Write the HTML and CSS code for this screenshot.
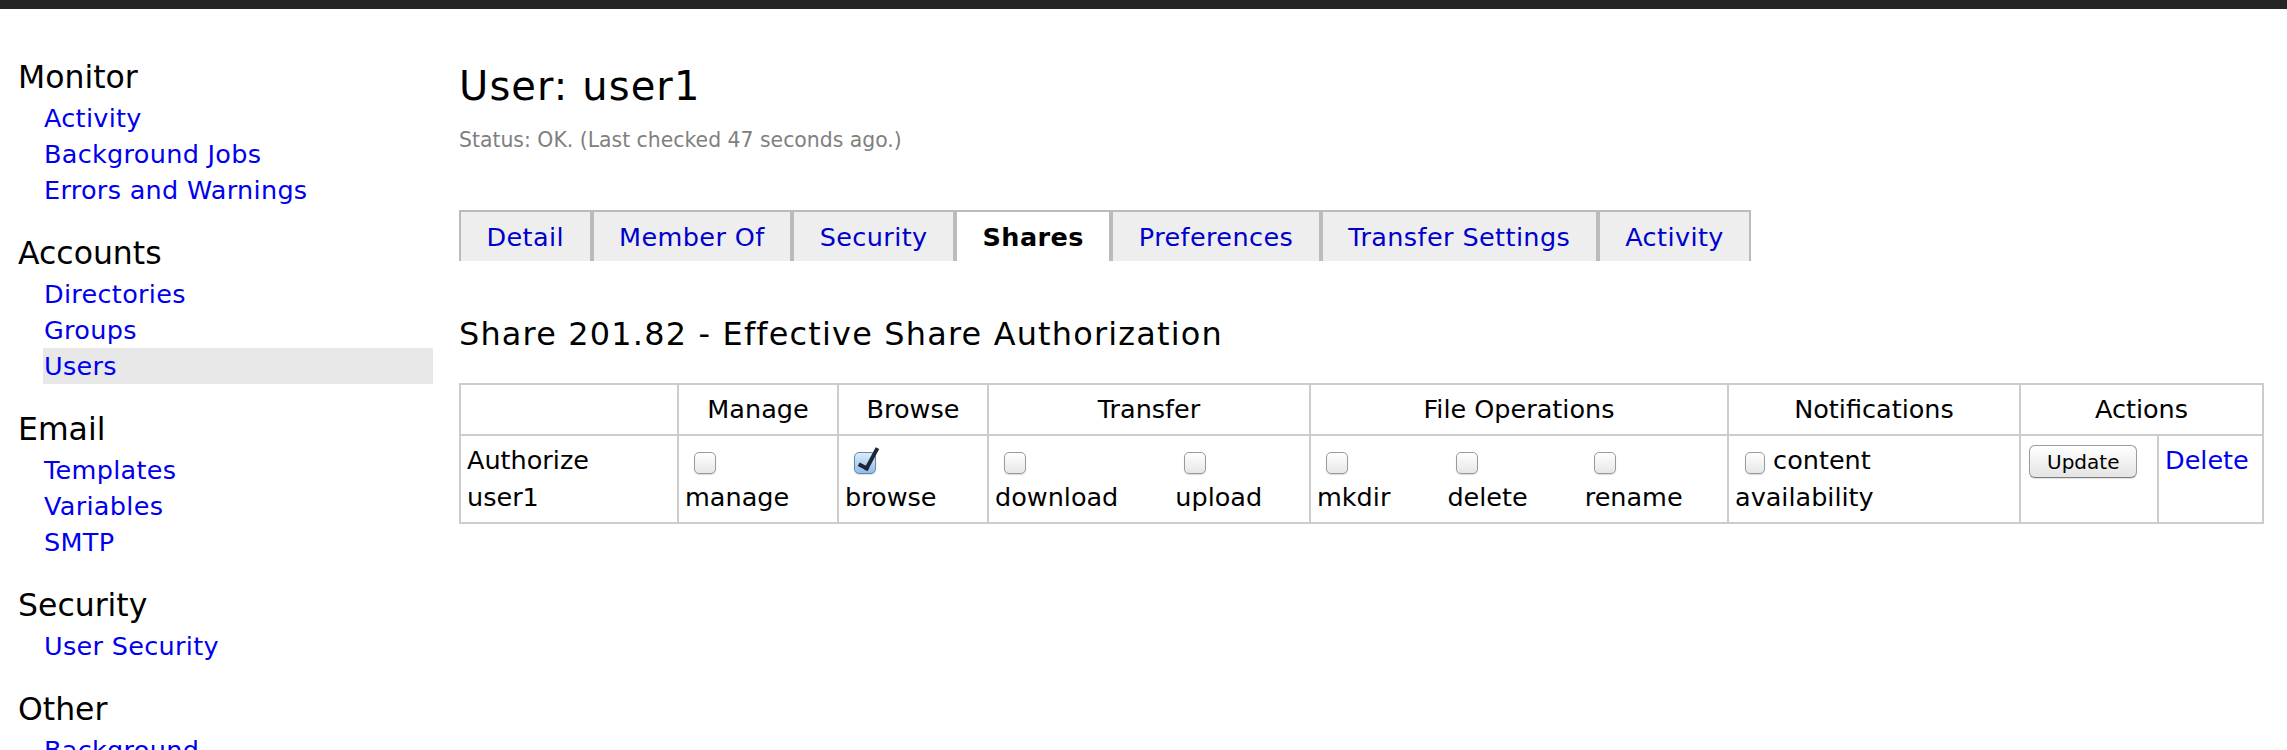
FILE: index.html
```html
<!DOCTYPE html>
<html lang="en">
<head>
    <meta charset="UTF-8">
    <meta name="viewport" content="width=device-width, initial-scale=1.0">
    <link rel="stylesheet" href="styles.css">
    <title>User: user1</title>
</head>
<body>
    <div id="topBar"></div>

    <div id="page">
        <div id="sidebar">
            <div class="nav-group">
                <h3 class="nav-title">Monitor</h3>
                <ul class="nav-list">
                    <li><a href="#">Activity</a></li>
                    <li><a href="#">Background Jobs</a></li>
                    <li><a href="#">Errors and Warnings</a></li>
                </ul>
            </div>
            <div class="nav-group">
                <h3 class="nav-title">Accounts</h3>
                <ul class="nav-list">
                    <li><a href="#">Directories</a></li>
                    <li><a href="#">Groups</a></li>
                    <li class="current"><a href="#">Users</a></li>
                </ul>
            </div>
            <div class="nav-group">
                <h3 class="nav-title">Email</h3>
                <ul class="nav-list">
                    <li><a href="#">Templates</a></li>
                    <li><a href="#">Variables</a></li>
                    <li><a href="#">SMTP</a></li>
                </ul>
            </div>
            <div class="nav-group">
                <h3 class="nav-title">Security</h3>
                <ul class="nav-list">
                    <li><a href="#">User Security</a></li>
                </ul>
            </div>
            <div class="nav-group">
                <h3 class="nav-title">Other</h3>
                <ul class="nav-list">
                    <li><a href="#">Background</a></li>
                </ul>
            </div>
        </div>

        <div id="content">
            <h1 class="page-title">User: user1</h1>
            <p class="status">Status: OK. (Last checked 47 seconds ago.)</p>

            <ul class="tabs">
                <li><a href="#">Detail</a></li>
                <li><a href="#">Member Of</a></li>
                <li><a href="#">Security</a></li>
                <li class="active"><a href="#">Shares</a></li>
                <li><a href="#">Preferences</a></li>
                <li><a href="#">Transfer Settings</a></li>
                <li><a href="#">Activity</a></li>
            </ul>

            <h2 class="section-title">Share 201.82 - Effective Share Authorization</h2>

            <form id="authForm">
                <table class="auth-table">
                    <colgroup>
                        <col class="col-name">
                        <col class="col-manage">
                        <col class="col-browse">
                        <col class="col-transfer">
                        <col class="col-fileops">
                        <col class="col-notify">
                        <col class="col-update">
                        <col class="col-delete">
                    </colgroup>
                    <tr>
                        <th></th>
                        <th>Manage</th>
                        <th>Browse</th>
                        <th>Transfer</th>
                        <th>File Operations</th>
                        <th>Notifications</th>
                        <th colspan="2">Actions</th>
                    </tr>
                    <tr>
                        <td>Authorize<br>user1</td>
                        <td>
                            <label class="opt"><input type="checkbox" class="check" name="manage"><br>manage</label>
                        </td>
                        <td>
                            <label class="opt"><input type="checkbox" class="check" name="browse" checked><br>browse</label>
                        </td>
                        <td>
                            <div class="opts">
                                <label class="opt"><input type="checkbox" class="check" name="download"><br>download</label>
                                <label class="opt"><input type="checkbox" class="check" name="upload"><br>upload</label>
                            </div>
                        </td>
                        <td>
                            <div class="opts">
                                <label class="opt"><input type="checkbox" class="check" name="mkdir"><br>mkdir</label>
                                <label class="opt"><input type="checkbox" class="check" name="delete"><br>delete</label>
                                <label class="opt"><input type="checkbox" class="check" name="rename"><br>rename</label>
                            </div>
                        </td>
                        <td>
                            <label class="opt"><input type="checkbox" class="check inline" name="content"> content<br>availability</label>
                        </td>
                        <td><button type="submit" class="btn">Update</button></td>
                        <td><a href="#" class="delete-link">Delete</a></td>
                    </tr>
                </table>
            </form>
        </div>
    </div>

    <script>
        document.getElementById("authForm").addEventListener("submit", function(event) {
            event.preventDefault();
        });
    </script>
</body>
</html>
```

FILE: styles.css
```css
body {
    font-family: "DejaVu Sans", Verdana, sans-serif;
    font-size: 25.5px;
    margin: 0;
    padding: 0;
    background-color: #fff;
    color: #000;
}

a {
    text-decoration: none;
}

#topBar {
    height: 9px;
    background-color: #252525;
}

#page {
    display: flex;
}

/* left navigation */
#sidebar {
    width: 433px;
    flex-shrink: 0;
    padding-top: 49px;
}

.nav-group {
    margin-bottom: 26px;
}

.nav-title {
    font-size: 31.5px;
    font-weight: normal;
    line-height: 38px;
    margin: 0 0 4px 18px;
}

.nav-list {
    list-style: none;
    margin: 0;
    padding: 0 0 0 43px;
}

.nav-list li {
    line-height: 36px;
}

.nav-list a {
    display: block;
    padding-left: 1px;
    color: #0000ee;
    letter-spacing: 0.3px;
}

.nav-list li.current {
    background-color: #e8e8e8;
}

/* main area */
#content {
    flex: 1;
    padding: 53px 25px 0 26px;
}

.page-title {
    font-size: 40px;
    font-weight: normal;
    line-height: 48px;
    letter-spacing: 1.1px;
    margin: 0;
}

.status {
    font-size: 20.4px;
    line-height: 25px;
    color: #808080;
    margin: 18px 0 0;
}

.tabs {
    display: flex;
    list-style: none;
    margin: 57px 0 0;
    padding: 0;
}

.tabs li {
    border: 2px solid #bbb;
    border-bottom: none;
    background-color: #eee;
    padding: 7px 25.5px 5px;
    line-height: 37px;
    letter-spacing: 0.4px;
}

.tabs a {
    color: #0000cc;
}

.tabs li.active {
    background-color: #fff;
}

.tabs li.active a {
    color: #000;
    font-weight: bold;
}

.section-title {
    font-size: 31.9px;
    font-weight: normal;
    line-height: 38px;
    letter-spacing: 1.2px;
    margin: 54px 0 30px;
}

/* authorization table */
.auth-table {
    width: 100%;
    table-layout: fixed;
    border-collapse: collapse;
    line-height: 37px;
}

.auth-table th,
.auth-table td {
    border: 2px solid #ccc;
    padding: 6px 6px;
    vertical-align: top;
    text-align: left;
}

.auth-table th {
    font-weight: normal;
    text-align: center;
}

.col-name { width: 218px; }
.col-manage { width: 160px; }
.col-browse { width: 150px; }
.col-transfer { width: 322px; }
.col-fileops { width: 418px; }
.col-notify { width: 292px; }
.col-update { width: 138px; }
.col-delete { width: 105px; }

.opts {
    display: flex;
    gap: 57px;
}

.opt {
    display: block;
}

.check {
    -webkit-appearance: none;
    appearance: none;
    position: relative;
    display: inline-block;
    vertical-align: top;
    width: 22px;
    height: 22px;
    margin: 10px 0 0 9px;
    box-sizing: border-box;
    border: 1px solid #9a9a9a;
    border-radius: 5px;
    background: linear-gradient(#ffffff, #e6e6e6);
    box-shadow: 0 1px 1px rgba(0, 0, 0, 0.15);
}

.check.inline {
    width: 20px;
    margin: 10px 0 0 10px;
}

.check:checked {
    border-color: #6b87a6;
    background: linear-gradient(#dcecfb, #8fbde9);
}

.check:checked::after {
    content: "";
    position: absolute;
    left: 8px;
    top: -8px;
    width: 7px;
    height: 21px;
    border: solid #1b2636;
    border-width: 0 4px 4px 0;
    transform: rotate(28deg);
}

.btn {
    font-family: "DejaVu Sans", Verdana, sans-serif;
    font-size: 20px;
    height: 33px;
    margin: 3px 0 0 2px;
    padding: 0 17px;
    vertical-align: top;
    border: 1px solid #9c9c9c;
    border-bottom-color: #7d7d7d;
    border-radius: 6px;
    background: linear-gradient(#ffffff, #e4e4e4);
    box-shadow: 0 1px 1px rgba(0, 0, 0, 0.12);
    color: #000;
    cursor: pointer;
}

.delete-link {
    color: #0000ee;
}
```
